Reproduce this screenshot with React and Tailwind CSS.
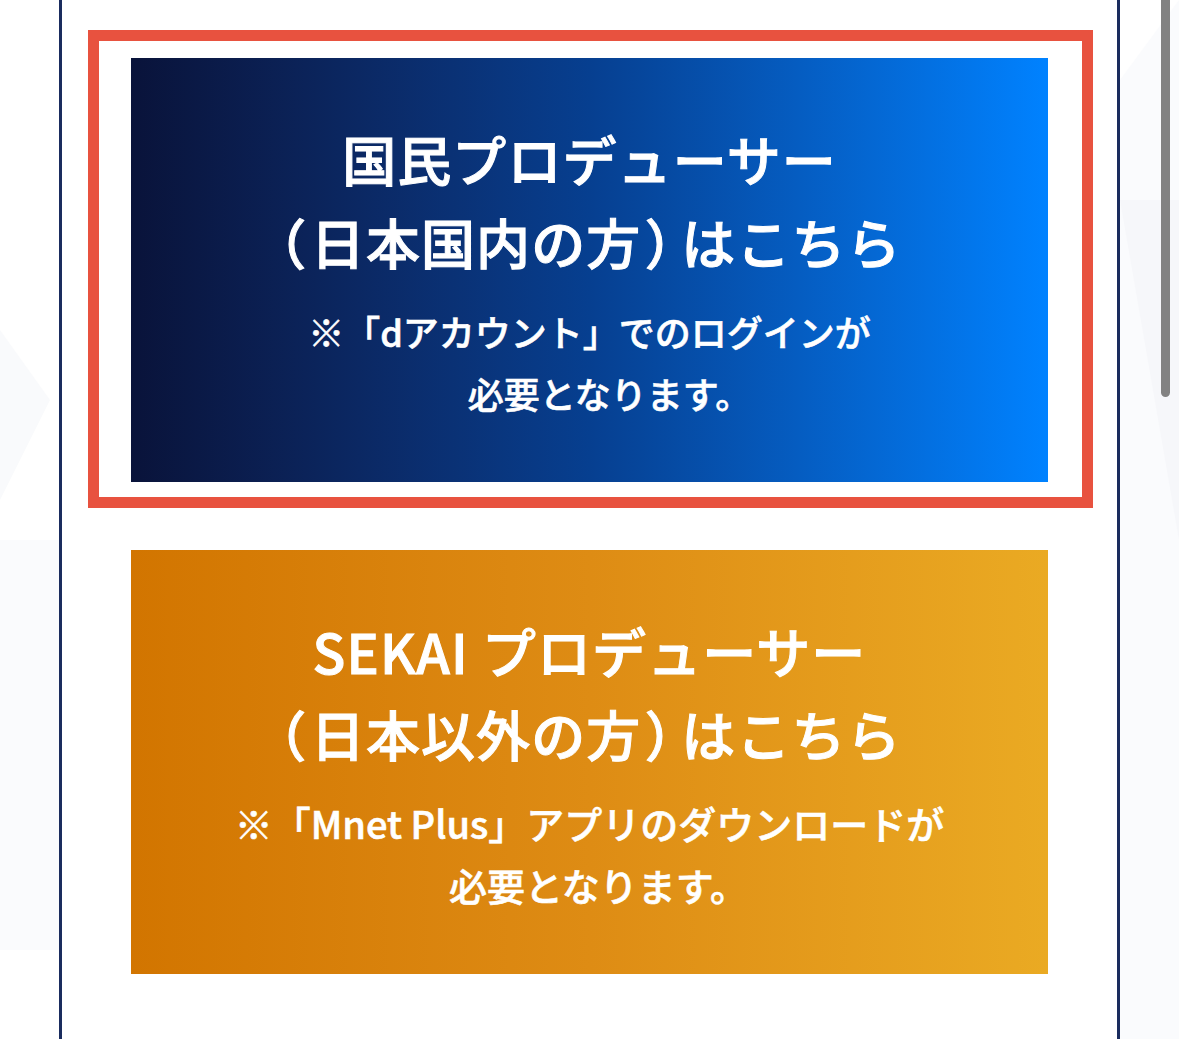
import React from "react";

const jp = { fontFamily: '"Noto Sans CJK JP", "Noto Sans", sans-serif' };

function Paren({ children, side }) {
  return (
    <span className={`[font-feature-settings:'palt'] ${side === "l" ? "mr-[0.1em]" : "ml-[0.1em] mr-[0.12em]"}`}>
      {children}
    </span>
  );
}

function Panel({ gradient, title1, place, note1, note2, noteSize, note2Shift }) {
  return (
    <div
      className={`w-[917px] h-[424px] flex flex-col items-center justify-center text-white text-center ${gradient}`}
      style={jp}
    >
      <div className="text-[54px] leading-[83px] font-medium tracking-[0.02em] [-webkit-text-stroke:1px_white]">{title1}</div>
      <div className="text-[54px] leading-[83px] font-medium tracking-[0.02em] [-webkit-text-stroke:1px_white]">
        <Paren side="l">（</Paren>
        {place}
        <Paren side="r">）</Paren>
        はこちら
      </div>
      <div className={`mt-[17px] leading-[62px] font-medium [-webkit-text-stroke:0.6px_white] ${noteSize}`}>{note1}</div>
      <div className={`leading-[62px] font-medium [-webkit-text-stroke:0.6px_white] ${noteSize} ${note2Shift}`}>{note2}</div>
    </div>
  );
}

export default function App() {
  return (
    <div className="relative w-[1179px] h-[1039px] overflow-hidden bg-white">
      {/* faint background decorations */}
      <svg className="absolute inset-0" width="1179" height="1039" viewBox="0 0 1179 1039">
        <polygon points="0,330 50,400 0,500" fill="#f9fafc" />
        <polygon points="0,540 59,540 59,950 0,950" fill="#fafbfd" />
        <polygon points="1120,80 1179,0 1179,580 1120,580" fill="#fafbfd" />
        <polygon points="1120,580 1179,580 1179,1039 1120,1039" fill="#fafbfd" />
        <polygon points="1120,200 1179,200 1179,540" fill="#f6f7fa" />
      </svg>

      <div className="relative ml-[59px] w-[1061px] h-full border-x-[3px] border-[#1a2c5e] bg-white">
        <div className="pt-[30px] pl-[26px] flex flex-col">
          <div className="w-[1005px] border-[11px] border-[#e8523f] pt-[17px] pb-[15px] pl-[32px]">
            <Panel
              gradient="bg-gradient-to-r from-[#09133a] via-[#063f90] to-[#0082ff]"
              title1="国民プロデューサー"
              place="日本国内の方"
              note1="※「dアカウント」でのログインが"
              note2="必要となります。"
              noteSize="text-[36px]"
              note2Shift="pl-[40px]"
            />
          </div>
          <div className="mt-[42px] pl-[43px]">
            <Panel
              gradient="bg-gradient-to-r from-[#d27500] via-[#de8c14] to-[#eaaa23]"
              title1="SEKAI プロデューサー"
              place="日本以外の方"
              note1="※「Mnet Plus」アプリのダウンロードが"
              note2="必要となります。"
              noteSize="text-[38px]"
              note2Shift="pl-[18px]"
            />
          </div>
        </div>
      </div>

      {/* scrollbar */}
      <div className="absolute left-[1161px] top-[-10px] w-[9px] h-[407px] rounded-full bg-[#828282]" />
    </div>
  );
}
